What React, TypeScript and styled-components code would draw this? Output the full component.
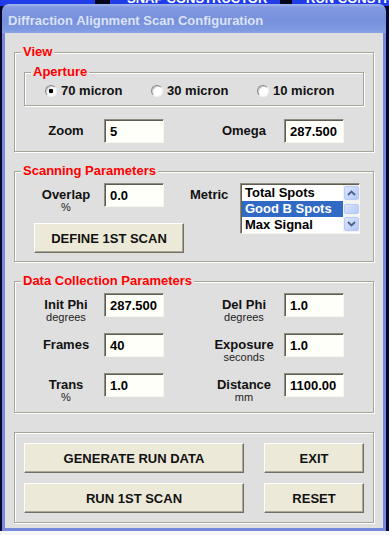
import React from 'react';
import styled, { createGlobalStyle } from 'styled-components';

const GlobalStyle = createGlobalStyle`
  html, body {
    margin: 0;
    padding: 0;
  }
  body {
    width: 389px;
    height: 535px;
    overflow: hidden;
    font-family: "Liberation Sans", Arial, sans-serif;
  }
`;

const FONT = `"Liberation Sans", Arial, sans-serif`;

const Desktop = styled.div`
  position: relative;
  width: 389px;
  height: 535px;
  overflow: hidden;
  background: linear-gradient(#1f3ce8 0, #1f3ce8 6px, #06062a 6px, #06062a 531px, #f6f6f6 531px);
`;

const DesktopLabel = styled.span<{ $x: number }>`
  position: absolute;
  top: -8px;
  left: ${p => p.$x}px;
  color: #fff;
  font: bold 13px/13px ${FONT};
  white-space: nowrap;
`;

const DesktopGap = styled.span<{ $x: number; $w: number }>`
  position: absolute;
  top: 0;
  left: ${p => p.$x}px;
  width: ${p => p.$w}px;
  height: 6px;
  background: #05051a;
`;

const Window = styled.div`
  position: absolute;
  left: 2px;
  top: 4px;
  width: 384px;
  height: 527px;
  display: flex;
  flex-direction: column;
  border-radius: 7px 7px 0 0;
  overflow: hidden;
`;

const TitleBar = styled.div`
  flex: none;
  height: 29px;
  box-sizing: border-box;
  padding: 3px 0 0 6px;
  display: flex;
  align-items: center;
  background: linear-gradient(180deg, #a3b7ee 0%, #8199e0 12%, #7690dc 55%, #7f9ae2 90%, #8ba4e6 100%);
  color: #dbe3f6;
  font: bold 13px ${FONT};
`;

const Body = styled.div`
  flex: 1;
  background: #dfdfdf;
  border: 3px solid #7889dc;
  border-top: none;
  padding: 19px 9px 0;
  display: flex;
  flex-direction: column;
  gap: 19px;
`;

const Group = styled.div<{ $h?: number; $pad: string }>`
  position: relative;
  box-sizing: border-box;
  height: ${p => (p.$h ? `${p.$h}px` : 'auto')};
  padding: ${p => p.$pad};
  border: 1px solid #a6a597;
  box-shadow: inset 1px 1px 0 #fff, 1px 1px 0 #fff;
`;

const Legend = styled.span`
  position: absolute;
  top: -9px;
  left: 6px;
  padding: 0 2px;
  background: #dfdfdf;
  color: #ff0000;
  font: bold 13px/16px ${FONT};
  white-space: nowrap;
`;

const RadioRow = styled.div`
  display: flex;
  height: 13px;
  align-items: center;
`;

const RadioItem = styled.label`
  width: 110px;
  display: flex;
  align-items: center;
  gap: 4px;
  font: bold 13px ${FONT};
  color: #111;
`;

const RadioCircle = styled.span<{ $on: boolean }>`
  width: 12px;
  height: 12px;
  box-sizing: border-box;
  border-radius: 50%;
  border: 1px solid;
  border-color: #8a8a8a #f4f4f4 #f4f4f4 #8a8a8a;
  box-shadow: inset 1px 1px 0 #c8c8c8;
  background: ${p => (p.$on ? 'radial-gradient(circle, #000 0 2px, #fff 2.6px)' : '#fff')};
`;

const FieldGrid = styled.div<{ $top: number }>`
  margin-top: ${p => p.$top}px;
  padding-left: 13px;
  display: grid;
  grid-template-columns: 76px 60px 120px 60px;
  grid-auto-rows: 24px;
  row-gap: 16px;
`;

const Label = styled.div<{ $right?: boolean }>`
  width: ${p => (p.$right ? '80px' : '76px')};
  justify-self: ${p => (p.$right ? 'end' : 'start')};
  display: flex;
  flex-direction: column;
  align-items: center;
  color: #111;
`;

const LabelMain = styled.span`
  font: bold 13px/24px ${FONT};
  white-space: nowrap;
`;

const LabelSub = styled.span`
  margin-top: -6px;
  font: 11px/12px ${FONT};
  color: #222;
`;

const TextBox = styled.input`
  width: 60px;
  height: 24px;
  box-sizing: border-box;
  margin: 0;
  padding: 0 0 0 5px;
  border: 1px solid;
  border-color: #8e8c7e #f7f6ee #f7f6ee #8e8c7e;
  box-shadow: inset 1px 1px 0 #5f5d52;
  background: #fffffa;
  color: #000;
  font: bold 13px ${FONT};
  outline: none;
`;

const ScanGrid = styled.div`
  padding-left: 13px;
  display: grid;
  grid-template-columns: 76px 60px 26px 50px 120px;
  grid-template-rows: 24px 16px 30px;
`;

const MetricLabel = styled.span`
  grid-column: 4;
  grid-row: 1;
  font: bold 13px/24px ${FONT};
  color: #111;
`;

const ListBox = styled.div`
  grid-column: 5;
  grid-row: 1 / span 3;
  height: 51px;
  box-sizing: border-box;
  display: flex;
  border: 1px solid;
  border-color: #8e8c7e #f7f6ee #f7f6ee #8e8c7e;
  box-shadow: inset 1px 1px 0 #5f5d52;
  background: #fff;
  padding: 1px 0 1px 1px;
`;

const ListItems = styled.div`
  flex: 1;
  display: flex;
  flex-direction: column;
`;

const ListItem = styled.div<{ $sel?: boolean }>`
  height: 16px;
  padding-left: 3px;
  font: bold 13px/16px ${FONT};
  color: ${p => (p.$sel ? '#fff' : '#000')};
  background: ${p => (p.$sel ? '#316ac5' : 'transparent')};
  white-space: nowrap;
`;

const ScrollTrack = styled.div`
  width: 16px;
  display: flex;
  flex-direction: column;
  justify-content: space-between;
  align-items: center;
  background: #f3f3ef;
  padding: 1px 0;
  box-sizing: border-box;
`;

const ScrollBtn = styled.div<{ $h: number }>`
  width: 15px;
  height: ${p => p.$h}px;
  box-sizing: border-box;
  border: 1px solid #b7cbf6;
  border-radius: 2px;
  background: linear-gradient(135deg, #dbe6fd 0%, #c3d4fc 60%, #b4c8f5 100%);
  display: flex;
  align-items: center;
  justify-content: center;
`;

const Button = styled.button<{ $w?: number }>`
  width: ${p => (p.$w ? `${p.$w}px` : '100%')};
  height: 30px;
  box-sizing: border-box;
  margin: 0;
  padding: 0;
  border: 1px solid;
  border-color: #ffffff #716f64 #716f64 #ffffff;
  box-shadow: inset -1px -1px 0 #aca899;
  background: #ece9d8;
  color: #111;
  font: bold 13px ${FONT};
  cursor: pointer;
`;

const DefineButton = styled(Button)`
  grid-column: 1 / span 3;
  grid-row: 3;
  margin-left: 6px;
`;

const ButtonGrid = styled.div`
  display: grid;
  grid-template-columns: 220px 100px;
  grid-auto-rows: 30px;
  column-gap: 20px;
  row-gap: 10px;
`;

const Chevron = ({ up }: { up?: boolean }) => (
  <svg width="9" height="6" viewBox="0 0 9 6">
    <path
      d={up ? 'M1 5 L4.5 1.5 L8 5' : 'M1 1 L4.5 4.5 L8 1'}
      fill="none"
      stroke="#4d6185"
      strokeWidth="1.8"
    />
  </svg>
);

type FieldProps = { label: string; sub?: string; value: string; right?: boolean };

const Field = ({ label, sub, value, right }: FieldProps) => (
  <>
    <Label $right={right}>
      <LabelMain>{label}</LabelMain>
      {sub && <LabelSub>{sub}</LabelSub>}
    </Label>
    <TextBox readOnly value={value} />
  </>
);

const apertures = ['70 micron', '30 micron', '10 micron'];

const App = () => (
  <Desktop>
    <GlobalStyle />
    <DesktopGap $x={95} $w={15} />
    <DesktopGap $x={280} $w={12} />
    <DesktopLabel $x={127}>SNAP CONSTRUCTOR</DesktopLabel>
    <DesktopLabel $x={306}>RUN CONSTRUCTOR</DesktopLabel>

    <Window>
      <TitleBar>Diffraction Alignment Scan Configuration</TitleBar>
      <Body>
        <Group $h={100} $pad="19px 0 0">
          <Legend>View</Legend>
          <Group $h={34} $pad="11px 0 0 20px" style={{ margin: '0 9px' }}>
            <Legend>Aperture</Legend>
            <RadioRow>
              {apertures.map((a, i) => (
                <RadioItem key={a}>
                  <RadioCircle $on={i === 0} />
                  {a}
                </RadioItem>
              ))}
            </RadioRow>
          </Group>
          <FieldGrid $top={13}>
            <Field label="Zoom" value="5" />
            <Field label="Omega" value="287.500" right />
          </FieldGrid>
        </Group>

        <Group $h={91} $pad="11px 0 0">
          <Legend>Scanning Parameters</Legend>
          <ScanGrid>
            <Field label="Overlap" sub="%" value="0.0" />
            <MetricLabel>Metric</MetricLabel>
            <ListBox>
              <ListItems>
                <ListItem>Total Spots</ListItem>
                <ListItem $sel>Good B Spots</ListItem>
                <ListItem>Max Signal</ListItem>
              </ListItems>
              <ScrollTrack>
                <ScrollBtn $h={14}>
                  <Chevron up />
                </ScrollBtn>
                <ScrollBtn $h={10} />
                <ScrollBtn $h={14}>
                  <Chevron />
                </ScrollBtn>
              </ScrollTrack>
            </ListBox>
            <DefineButton $w={150}>DEFINE 1ST SCAN</DefineButton>
          </ScanGrid>
        </Group>

        <Group $h={132} $pad="11px 0 0">
          <Legend>Data Collection Parameters</Legend>
          <FieldGrid $top={0}>
            <Field label="Init Phi" sub="degrees" value="287.500" />
            <Field label="Del Phi" sub="degrees" value="1.0" right />
            <Field label="Frames" value="40" />
            <Field label="Exposure" sub="seconds" value="1.0" right />
            <Field label="Trans" sub="%" value="1.0" />
            <Field label="Distance" sub="mm" value="1100.00" right />
          </FieldGrid>
        </Group>

        <Group $h={91} $pad="10px 0 0 9px">
          <ButtonGrid>
            <Button>GENERATE RUN DATA</Button>
            <Button>EXIT</Button>
            <Button>RUN 1ST SCAN</Button>
            <Button>RESET</Button>
          </ButtonGrid>
        </Group>
      </Body>
    </Window>
  </Desktop>
);

export default App;
